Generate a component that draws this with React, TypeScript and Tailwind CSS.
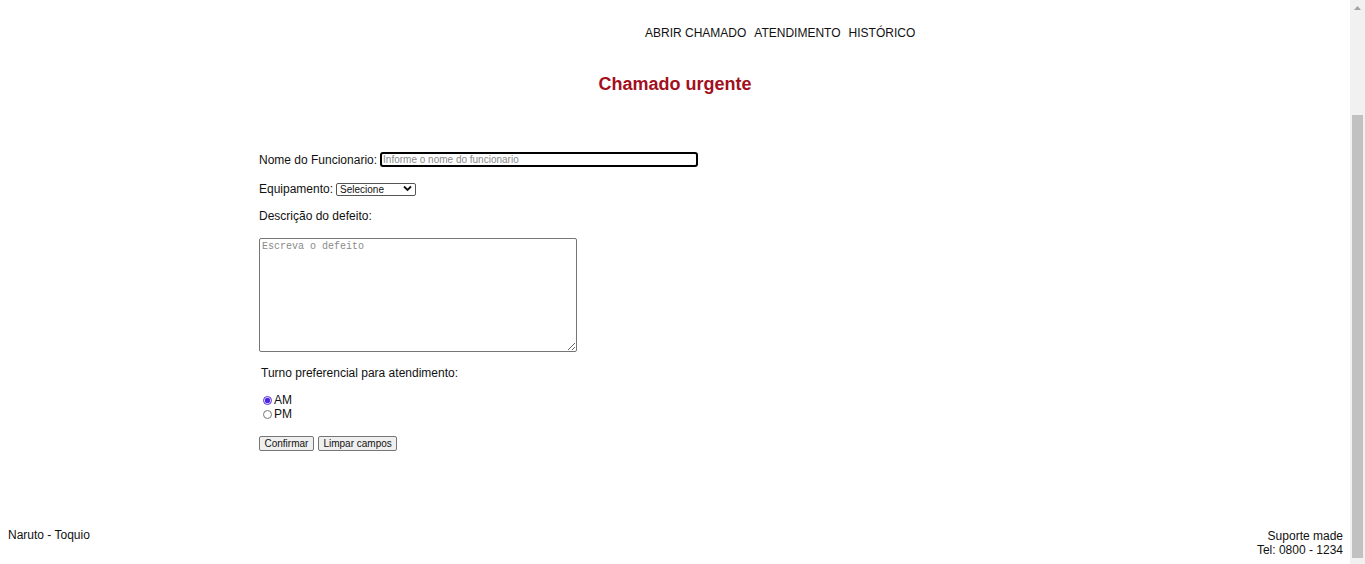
import React from 'react';

const navItems = ['ABRIR CHAMADO', 'ATENDIMENTO', 'HISTÓRICO'];

function ScrollBar() {
  return (
    <aside className="w-[15px] shrink-0 bg-[#f1f1f1] flex flex-col items-center">
      <div className="h-[15px] flex items-center justify-center">
        <svg width="7" height="4" viewBox="0 0 7 4">
          <path d="M0 4 L3.5 0 L7 4 Z" fill="#a3a3a3" />
        </svg>
      </div>
      <div className="h-[100px]" />
      <div className="w-[11px] h-[443px] bg-[#c1c1c1]" />
    </aside>
  );
}

export default function App() {
  return (
    <div className="h-[564px] flex bg-white text-[#111] font-['Liberation_Sans',Arial,sans-serif] overflow-hidden">
      <main className="flex-1 flex flex-col">
        {/* Top menu */}
        <nav className="pt-[26px] pl-[645px]">
          <ul className="flex gap-[8px] text-[12px] leading-[14px]">
            {navItems.map((item) => (
              <li key={item}>
                <a href="#">{item}</a>
              </li>
            ))}
          </ul>
        </nav>

        <h1 className="mt-[34px] text-center text-[18px] leading-[21px] font-bold text-[#a30f21]">
          Chamado urgente
        </h1>

        {/* Form */}
        <form className="mt-[57px] pl-[259px] text-[12px] leading-[14px]">
          <div className="flex items-center h-[15px]">
            <label htmlFor="nome">Nome do Funcionario:</label>
            <input
              id="nome"
              type="text"
              placeholder="Informe o nome do funcionario"
              className="ml-[3px] w-[318px] h-[15px] border-2 border-black rounded-[3px] px-[1px] text-[10px] placeholder:text-[#8a8a8a] outline-none"
            />
          </div>

          <div className="mt-[15px] flex items-center h-[13px]">
            <label htmlFor="equip">Equipamento:</label>
            <div className="relative ml-[3px]">
              <select
                id="equip"
                className="appearance-none w-[80px] h-[13px] border border-[#555] rounded-[2px] pl-[3px] text-[10px] leading-[11px] bg-white"
              >
                <option>Selecione</option>
                <option>Computador</option>
                <option>Impressora</option>
                <option>Monitor</option>
              </select>
              <svg
                className="pointer-events-none absolute right-[4px] top-[3px]"
                width="9"
                height="7"
                viewBox="0 0 9 7"
              >
                <path d="M1 1.5 L4.5 5 L8 1.5" fill="none" stroke="#111" strokeWidth="1.8" />
              </svg>
            </div>
          </div>

          <p className="mt-[14px]">Descrição do defeito:</p>

          <textarea
            placeholder="Escreva o defeito"
            className="mt-[15px] block w-[318px] h-[114px] border border-[#767676] rounded-[2px] px-[2px] py-[1px] text-[10px] leading-[13px] font-['Liberation_Mono','DejaVu_Sans_Mono',monospace] placeholder:text-[#8a8a8a] outline-none"
          />

          <p className="mt-[14px] pl-[2px]">Turno preferencial para atendimento:</p>

          <div className="mt-[13px] pl-[4px]">
            <label className="flex items-center h-[14px]">
              <input
                type="radio"
                name="turno"
                defaultChecked
                className="w-[9px] h-[9px] m-0 accent-[#4f24e0]"
              />
              <span className="ml-[2px]">AM</span>
            </label>
            <label className="flex items-center h-[14px]">
              <input type="radio" name="turno" className="w-[9px] h-[9px] m-0 accent-[#4f24e0]" />
              <span className="ml-[2px]">PM</span>
            </label>
          </div>

          <div className="mt-[15px] flex gap-[4px]">
            <button
              type="submit"
              className="h-[15px] px-[4.5px] border border-[#767676] rounded-[2px] bg-[#efefef] text-[10px] leading-[13px]"
            >
              Confirmar
            </button>
            <button
              type="reset"
              className="h-[15px] px-[4.5px] border border-[#767676] rounded-[2px] bg-[#efefef] text-[10px] leading-[13px]"
            >
              Limpar campos
            </button>
          </div>
        </form>

        {/* Footer */}
        <footer className="mt-auto pr-[7px] pb-[7px] pl-[8px] flex justify-between items-start text-[12px] leading-[14px]">
          <p className="-mt-[1px]">Naruto - Toquio</p>
          <div className="text-right">
            <p>Suporte made</p>
            <p>Tel: 0800 - 1234</p>
          </div>
        </footer>
      </main>

      <ScrollBar />
    </div>
  );
}
